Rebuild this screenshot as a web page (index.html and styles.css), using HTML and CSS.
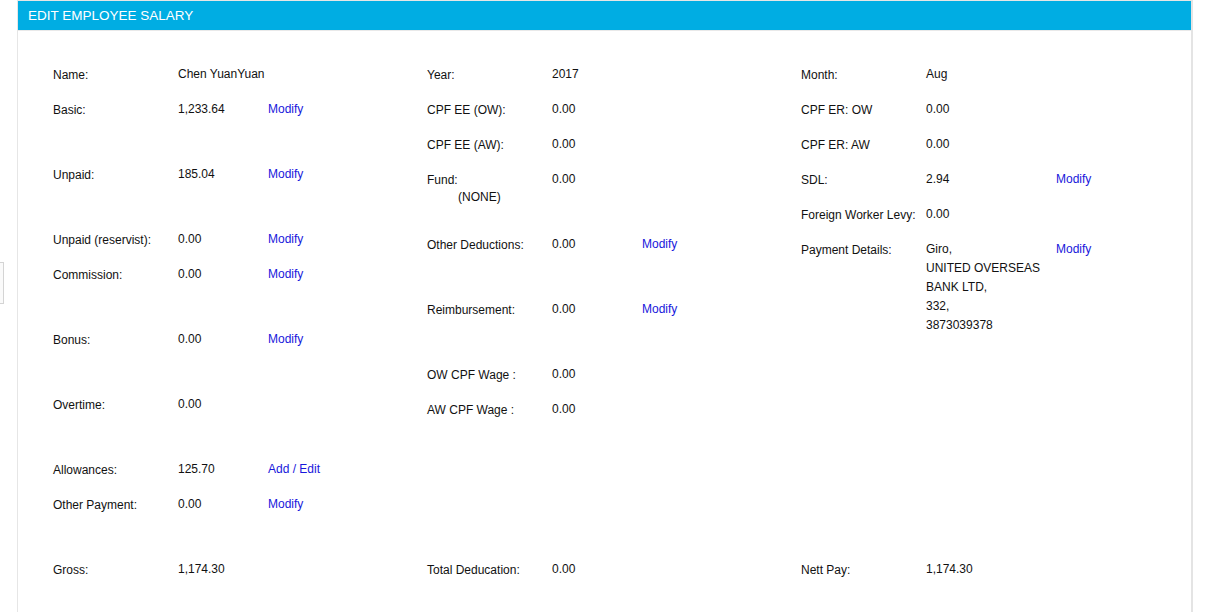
FILE: index.html
```html
<!DOCTYPE html>
<html>
<head>
<meta charset="utf-8">
<link rel="stylesheet" href="styles.css">
</head>
<body>
<div class="side-tab"></div>
<div class="panel">
  <div class="panel-head">EDIT EMPLOYEE SALARY</div>
  <div class="panel-body">
    <div class="grid">
      <div class="col">
        <div class="row"><div class="lbl">Name:</div><div class="val">Chen YuanYuan</div></div>
        <div class="row tall"><div class="lbl">Basic:</div><div class="val">1,233.64</div><a class="act">Modify</a></div>
        <div class="row tall"><div class="lbl">Unpaid:</div><div class="val">185.04</div><a class="act">Modify</a></div>
        <div class="row"><div class="lbl">Unpaid (reservist):</div><div class="val">0.00</div><a class="act">Modify</a></div>
        <div class="row tall"><div class="lbl">Commission:</div><div class="val">0.00</div><a class="act">Modify</a></div>
        <div class="row tall"><div class="lbl">Bonus:</div><div class="val">0.00</div><a class="act">Modify</a></div>
        <div class="row tall"><div class="lbl">Overtime:</div><div class="val">0.00</div></div>
        <div class="row"><div class="lbl">Allowances:</div><div class="val">125.70</div><a class="act">Add / Edit</a></div>
        <div class="row tall"><div class="lbl">Other Payment:</div><div class="val">0.00</div><a class="act">Modify</a></div>
      </div>
      <div class="col">
        <div class="row"><div class="lbl">Year:</div><div class="val">2017</div></div>
        <div class="row"><div class="lbl">CPF EE (OW):</div><div class="val">0.00</div></div>
        <div class="row"><div class="lbl">CPF EE (AW):</div><div class="val">0.00</div></div>
        <div class="row tall"><div class="lbl fund">Fund:<div class="sub">(NONE)</div></div><div class="val">0.00</div></div>
        <div class="row tall"><div class="lbl">Other Deductions:</div><div class="val">0.00</div><a class="act">Modify</a></div>
        <div class="row tall"><div class="lbl">Reimbursement:</div><div class="val">0.00</div><a class="act">Modify</a></div>
        <div class="row"><div class="lbl">OW CPF Wage :</div><div class="val">0.00</div></div>
        <div class="row"><div class="lbl">AW CPF Wage :</div><div class="val">0.00</div></div>
      </div>
      <div class="col">
        <div class="row"><div class="lbl">Month:</div><div class="val">Aug</div></div>
        <div class="row"><div class="lbl">CPF ER: OW</div><div class="val">0.00</div></div>
        <div class="row"><div class="lbl">CPF ER: AW</div><div class="val">0.00</div></div>
        <div class="row"><div class="lbl">SDL:</div><div class="val">2.94</div><a class="act wide">Modify</a></div>
        <div class="row"><div class="lbl">Foreign Worker Levy:</div><div class="val">0.00</div></div>
        <div class="row"><div class="lbl">Payment Details:</div><div class="val multi">Giro,<br>UNITED OVERSEAS<br>BANK LTD,<br>332,<br>3873039378</div><a class="act wide">Modify</a></div>
      </div>
      <div class="col">
        <div class="row"><div class="lbl">Gross:</div><div class="val">1,174.30</div></div>
      </div>
      <div class="col">
        <div class="row"><div class="lbl">Total Deducation:</div><div class="val">0.00</div></div>
      </div>
      <div class="col">
        <div class="row"><div class="lbl">Nett Pay:</div><div class="val">1,174.30</div></div>
      </div>
    </div>
  </div>
</div>
</body>
</html>
```

FILE: styles.css
```css
html, body {
  margin: 0;
  padding: 0;
  background: #ffffff;
}
body {
  font-family: "Liberation Sans", Arial, sans-serif;
  font-size: 12px;
  color: #111111;
  position: relative;
}
.side-tab {
  position: absolute;
  left: -6px;
  top: 262px;
  width: 8px;
  height: 40px;
  border: 1px solid #d4d4d4;
  background: #fafafa;
}
.panel {
  margin-left: 17px;
  width: 1173px;
  border: 1px solid #e6e6e6;
  border-right: 2px solid #e4e4e4;
  min-height: 640px;
}
.panel-head {
  height: 29px;
  line-height: 29px;
  background: #00ade3;
  color: #ffffff;
  font-size: 13.5px;
  padding-left: 10px;
  border-bottom: 1px solid #e9e9e9;
}
.panel-body {
  padding: 26px 0 40px 35px;
}
.grid {
  display: grid;
  grid-template-columns: 374px 374px 374px;
}
.col {
  display: flex;
  flex-direction: column;
}
.row {
  display: flex;
  height: 35px;
}
.row.tall {
  height: 65px;
}
.lbl {
  width: 125px;
  padding-top: 11px;
  line-height: 15px;
}
.lbl.fund {
  padding-top: 10px;
  line-height: 17px;
}
.sub {
  padding-left: 31px;
}
.val {
  width: 90px;
  padding-top: 10px;
  line-height: 15px;
}
.val.multi {
  width: 130px;
  padding-top: 8px;
  line-height: 19px;
}
.act {
  padding-top: 10px;
  line-height: 15px;
  color: #1818dc;
  cursor: pointer;
}
.val + .act.wide {
  margin-left: 40px;
}
.val.multi + .act.wide {
  margin-left: 0;
}
```
